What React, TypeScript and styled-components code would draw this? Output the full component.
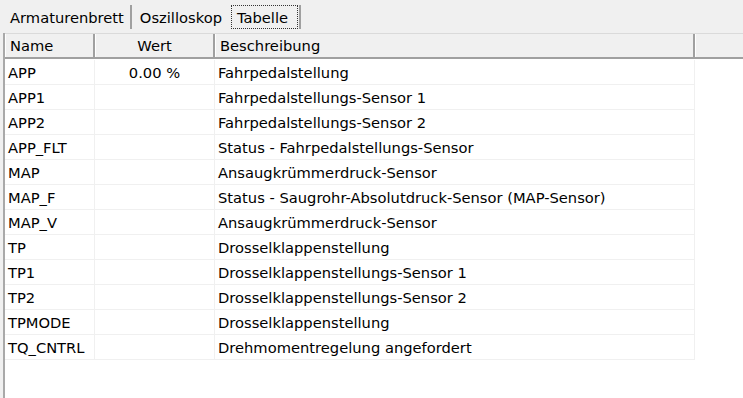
import React from 'react';
import styled, { createGlobalStyle } from 'styled-components';

const GlobalStyle = createGlobalStyle`
  html, body {
    margin: 0;
    padding: 0;
    background: #f0f0f0;
  }
  body {
    font-family: "DejaVu Sans", Verdana, sans-serif;
    color: #000;
  }
`;

const rows: { name: string; value: string; desc: string }[] = [
  { name: 'APP', value: '0.00 %', desc: 'Fahrpedalstellung' },
  { name: 'APP1', value: '', desc: 'Fahrpedalstellungs-Sensor 1' },
  { name: 'APP2', value: '', desc: 'Fahrpedalstellungs-Sensor 2' },
  { name: 'APP_FLT', value: '', desc: 'Status - Fahrpedalstellungs-Sensor' },
  { name: 'MAP', value: '', desc: 'Ansaugkrümmerdruck-Sensor' },
  { name: 'MAP_F', value: '', desc: 'Status - Saugrohr-Absolutdruck-Sensor (MAP-Sensor)' },
  { name: 'MAP_V', value: '', desc: 'Ansaugkrümmerdruck-Sensor' },
  { name: 'TP', value: '', desc: 'Drosselklappenstellung' },
  { name: 'TP1', value: '', desc: 'Drosselklappenstellungs-Sensor 1' },
  { name: 'TP2', value: '', desc: 'Drosselklappenstellungs-Sensor 2' },
  { name: 'TPMODE', value: '', desc: 'Drosselklappenstellung' },
  { name: 'TQ_CNTRL', value: '', desc: 'Drehmomentregelung angefordert' },
];

const Window = styled.div`
  width: 743px;
  height: 398px;
  display: flex;
  flex-direction: column;
  overflow: hidden;
  font-size: 14.7px;
`;

const TabStrip = styled.div`
  height: 33px;
  box-sizing: border-box;
  display: flex;
  align-items: flex-start;
  padding: 5px 0 0 4px;
`;

const Tab = styled.div<{ $edge?: boolean }>`
  height: 24px;
  line-height: 24px;
  padding: 0 1px;
  margin-right: 2px;
  border-right: ${({ $edge }) => ($edge ? '2px solid #a0a0a0' : 'none')};
`;

// focused tab carries the dotted focus rectangle
const TabLabel = styled.span<{ $focused?: boolean }>`
  display: inline-block;
  height: 22px;
  line-height: 23px;
  padding: ${({ $focused }) => ($focused ? '0 9px 0 5px' : '0 4px')};
  border: 1px dotted ${({ $focused }) => ($focused ? '#333' : 'transparent')};
`;

const Panel = styled.div`
  flex: 1;
  margin-left: 3px;
  border-left: 2px solid #a9a9a9;
  background: #fff;
  display: flex;
  flex-direction: column;
`;

const HeaderRow = styled.div`
  display: flex;
  height: 26px;
  box-sizing: border-box;
  background: #f0f0f0;
  border-top: 1px solid #dadada;
  border-bottom: 2px solid #a0a0a0;
  margin-bottom: 1px;
`;

const HeaderCell = styled.div<{ $w?: number; $center?: boolean }>`
  ${({ $w }) => ($w ? `width: ${$w}px;` : 'flex: 1;')}
  box-sizing: border-box;
  padding: 0 4px;
  line-height: 24px;
  text-align: ${({ $center }) => ($center ? 'center' : 'left')};
  border-right: ${({ $w }) => ($w ? '2px solid #a0a0a0' : 'none')};
  border-left: 1px solid #fff;
  white-space: nowrap;
`;

const Row = styled.div`
  display: flex;
  height: 25px;
  box-sizing: border-box;
`;

const Cell = styled.div<{ $w: number; $center?: boolean }>`
  width: ${({ $w }) => $w}px;
  box-sizing: border-box;
  padding: 0 3px;
  line-height: 25px;
  text-align: ${({ $center }) => ($center ? 'center' : 'left')};
  border-right: 1px solid #f0f0f0;
  border-bottom: 1px solid #f0f0f0;
  white-space: nowrap;
`;

const COLS = [90, 120, 480];

export default function App() {
  return (
    <Window>
      <GlobalStyle />
      <TabStrip>
        <Tab $edge>
          <TabLabel>Armaturenbrett</TabLabel>
        </Tab>
        <Tab>
          <TabLabel>Oszilloskop</TabLabel>
        </Tab>
        <Tab $edge>
          <TabLabel $focused>Tabelle</TabLabel>
        </Tab>
      </TabStrip>
      <Panel>
        <HeaderRow>
          <HeaderCell $w={COLS[0]}>Name</HeaderCell>
          <HeaderCell $w={COLS[1]} $center>Wert</HeaderCell>
          <HeaderCell $w={COLS[2]}>Beschreibung</HeaderCell>
          <HeaderCell />
        </HeaderRow>
        {rows.map((r) => (
          <Row key={r.name}>
            <Cell $w={COLS[0]}>{r.name}</Cell>
            <Cell $w={COLS[1]} $center>{r.value}</Cell>
            <Cell $w={COLS[2]}>{r.desc}</Cell>
          </Row>
        ))}
      </Panel>
    </Window>
  );
}
